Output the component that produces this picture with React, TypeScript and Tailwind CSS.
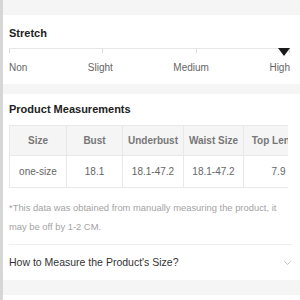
import React from 'react';

const levels = ['Non', 'Slight', 'Medium', 'High'];

const columns = [
  { label: 'Size', value: 'one-size', w: 'w-[57px]' },
  { label: 'Bust', value: '18.1', w: 'w-[56px]' },
  { label: 'Underbust', value: '18.1-47.2', w: 'w-[61px]' },
  { label: 'Waist Size', value: '18.1-47.2', w: 'w-[60px]' },
  { label: 'Top Length', value: '7.9', w: 'w-[70px]' },
];

const StretchScale = () => (
  <div className="mt-[7px]">
    <div className="relative">
      <div className="border-t border-[#e6e6e6]" />
      <div className="flex justify-between">
        {levels.map((l) => (
          <span key={l} className="w-px h-[4px] bg-[#dcdcdc]" />
        ))}
      </div>
      {/* marker on selected level */}
      <div className="absolute right-0 top-0 w-0 h-0 border-l-[6px] border-r-[6px] border-t-[8px] border-l-transparent border-r-transparent border-t-[#1a1a1a]" />
    </div>
    <div className="flex justify-between mt-[7px] text-[10px] leading-[15px] text-[#666]">
      {levels.map((l) => (
        <span key={l}>{l}</span>
      ))}
    </div>
  </div>
);

export default function App() {
  return (
    <div
      className="w-[300px] h-[300px] overflow-hidden bg-[#f5f5f5] border-l-[3px] border-[#d6d6d6] flex flex-col"
      style={{ fontFamily: '"Liberation Sans", Arial, sans-serif' }}
    >
      <div className="h-[15px] shrink-0" />

      {/* Stretch */}
      <div className="bg-white pl-[6px] pr-[10px] pt-[10px] pb-[9px] shrink-0">
        <h2 className="text-[11px] leading-[16px] font-bold text-[#222]">Stretch</h2>
        <StretchScale />
      </div>

      <div className="h-[10px] shrink-0" />

      {/* Product Measurements */}
      <div className="bg-white px-[6px] pt-[7px] shrink-0">
        <h2 className="text-[11px] leading-[16px] font-bold text-[#222]">Product Measurements</h2>
        <div className="mt-[8px] w-[279px] overflow-hidden">
          <div className="flex w-max border-l border-t border-[#e8e8e8]">
            {columns.map((c) => (
              <div key={c.label} className={`${c.w} shrink-0 flex flex-col border-r border-[#e8e8e8] text-center`}>
                <div className="h-[30px] flex items-center justify-center bg-[#f5f5f5] border-b border-[#e8e8e8] text-[10px] font-bold text-[#777] whitespace-nowrap">
                  {c.label}
                </div>
                <div className="h-[32px] flex items-center justify-center border-b border-[#e8e8e8] text-[10px] text-[#666] whitespace-nowrap">
                  {c.value}
                </div>
              </div>
            ))}
          </div>
        </div>
        <p className="mt-[10px] text-[9.4px] leading-[19px] text-[#a3a3a3]">
          *This data was obtained from manually measuring the product, it may be off by 1-2 CM.
        </p>
        <div className="mt-[8px] border-t border-[#eeeeee] mr-[2px]" />
        <div className="h-[35px] flex items-center justify-between text-[10.5px] text-[#333]">
          <span>How to Measure the Product's Size?</span>
          <svg width="7" height="4" viewBox="0 0 7 4" className="mr-[3px]">
            <path d="M0.5 0.5 L3.5 3.5 L6.5 0.5" fill="none" stroke="#c2c2c2" strokeWidth="1" />
          </svg>
        </div>
      </div>

      <div className="h-[15px] shrink-0" />

      {/* Body Measurements */}
      <div className="bg-white px-[6px] pt-[4px] flex-1">
        <h2 className="text-[11px] leading-[16px] font-bold text-[#222]">Body Measurements</h2>
      </div>
    </div>
  );
}
